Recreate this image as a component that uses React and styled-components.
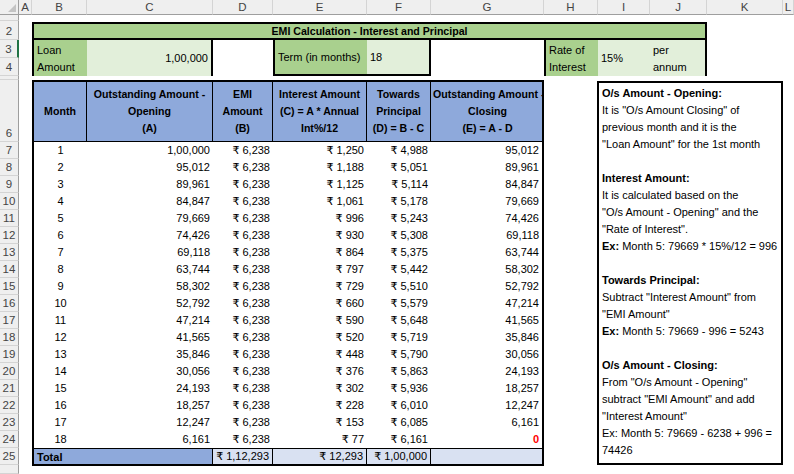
import React from 'react'
import styled, { createGlobalStyle } from 'styled-components'

const GlobalStyle = createGlobalStyle`
  html, body {
    margin: 0;
    padding: 0;
    background: #ffffff;
  }
  body {
    font-family: "Liberation Sans", "DejaVu Sans", "Noto Sans", sans-serif;
  }
`

const letters = ['A', 'B', 'C', 'D', 'E', 'F', 'G', 'H', 'I', 'J', 'K', 'L']
const rowNums = Array.from({ length: 26 }, (_, i) => i + 1)
// rows 1 and 5 are hidden (tiny), row 26 only peeks in at the bottom
const unlabelled = [1, 5, 26]

const schedule = [
  ['1', '1,00,000', '1,250', '4,988', '95,012'],
  ['2', '95,012', '1,188', '5,051', '89,961'],
  ['3', '89,961', '1,125', '5,114', '84,847'],
  ['4', '84,847', '1,061', '5,178', '79,669'],
  ['5', '79,669', '996', '5,243', '74,426'],
  ['6', '74,426', '930', '5,308', '69,118'],
  ['7', '69,118', '864', '5,375', '63,744'],
  ['8', '63,744', '797', '5,442', '58,302'],
  ['9', '58,302', '729', '5,510', '52,792'],
  ['10', '52,792', '660', '5,579', '47,214'],
  ['11', '47,214', '590', '5,648', '41,565'],
  ['12', '41,565', '520', '5,719', '35,846'],
  ['13', '35,846', '448', '5,790', '30,056'],
  ['14', '30,056', '376', '5,863', '24,193'],
  ['15', '24,193', '302', '5,936', '18,257'],
  ['16', '18,257', '228', '6,010', '12,247'],
  ['17', '12,247', '153', '6,085', '6,161'],
  ['18', '6,161', '77', '6,161', '0'],
]

const Sheet = styled.div`
  display: grid;
  grid-template-columns: 19px 13px 55px 126px 60px 94px 64px 113px 54px 52px 57px 76px 1fr;
  grid-template-rows: 15px 6px 19px 18px 18px 4px 62px repeat(19, 17px) 1fr;
  width: 794px;
  height: 474px;
  overflow: hidden;
  font-size: 11px;
  color: #000;
  background: #fff;
`

const Corner = styled.div`
  grid-column: 1;
  grid-row: 1;
  position: relative;
  background: #efefef;
  border-right: 1px solid #9e9e9e;
  border-bottom: 1px solid #9e9e9e;
  &::after {
    content: "";
    position: absolute;
    right: 2px;
    bottom: 2px;
    border-left: 8px solid transparent;
    border-bottom: 8px solid #c4c4c4;
  }
`

const ColHead = styled.div`
  grid-column: ${p => p.$col};
  grid-row: 1;
  display: flex;
  align-items: center;
  justify-content: center;
  background: #efefef;
  color: #444;
  font-size: 11.5px;
  border-right: 1px solid #d4d4d4;
  border-bottom: 1px solid #9e9e9e;
`

const RowHead = styled.div`
  grid-column: 1;
  grid-row: ${p => p.$row};
  display: flex;
  align-items: flex-end;
  justify-content: center;
  background: #efefef;
  color: #444;
  font-size: 11.5px;
  line-height: 16px;
  overflow: hidden;
  border-bottom: 1px solid #d4d4d4;
  border-right: ${p => (p.$active ? '2px solid #217346' : '1px solid #9e9e9e')};
`

const Title = styled.div`
  grid-column: 3 / 12;
  grid-row: 3;
  margin-top: 1px;
  border: 2px solid #000;
  background: #a9d08e;
  display: flex;
  align-items: center;
  justify-content: center;
  font-weight: bold;
  font-size: 10.6px;
`

const InputBox = styled.div`
  grid-column: ${p => p.$cols};
  grid-row: 4 / 6;
  display: grid;
  grid-template-columns: ${p => p.$tracks};
  border: 2px solid #000;
  border-top: none;
`

const Label = styled.div`
  background: #a9d08e;
  padding: ${p => (p.$stacked ? '2px 0 0 3px' : '0 0 0 3px')};
  line-height: 17px;
  display: flex;
  flex-direction: column;
  justify-content: ${p => (p.$stacked ? 'flex-start' : 'center')};
  white-space: nowrap;
`

const Value = styled.div`
  background: #e2efda;
  line-height: 17px;
  display: flex;
  flex-direction: column;
  justify-content: ${p => (p.$stacked ? 'flex-start' : 'center')};
  align-items: ${p => (p.$right ? 'flex-end' : 'flex-start')};
  padding: ${p => (p.$stacked ? '2px 3px 0 3px' : '0 3px')};
  white-space: nowrap;
`

const Table = styled.div`
  grid-column: 3 / 9;
  grid-row: 7 / 27;
  display: grid;
  grid-template-columns: 53px 126px 60px 94px 64px 1fr;
  grid-template-rows: 60px repeat(18, 17px) 1fr;
  border: 2px solid #000;
  margin-bottom: -1px;
`

const HeadCell = styled.div`
  background: #8ea9db;
  border-bottom: 1px solid #000;
  border-right: ${p => (p.$last ? 'none' : '1px solid #000')};
  display: flex;
  flex-direction: column;
  justify-content: center;
  align-items: ${p => (p.$clip ? 'flex-start' : 'center')};
  text-align: center;
  font-weight: bold;
  font-size: 10.6px;
  line-height: 17px;
  white-space: nowrap;
  overflow: hidden;
  padding-left: ${p => (p.$clip ? '2px' : '0')};
  span {
    align-self: center;
  }
`

const Cell = styled.div`
  line-height: 17px;
  text-align: ${p => p.$align || 'right'};
  padding: 0 3px;
  white-space: nowrap;
  color: ${p => (p.$alert ? '#ff0000' : '#000')};
  font-weight: ${p => (p.$alert ? 'bold' : 'normal')};
`

const TotalCell = styled.div`
  grid-column: ${p => p.$span || 'auto'};
  background: ${p => (p.$strong ? '#8ea9db' : '#d9e1f2')};
  border-top: 1px solid #000;
  border-right: ${p => (p.$last ? 'none' : '1px solid #000')};
  display: flex;
  align-items: center;
  justify-content: ${p => (p.$strong ? 'flex-start' : 'flex-end')};
  padding: 0 3px;
  font-weight: ${p => (p.$strong ? 'bold' : 'normal')};
  white-space: nowrap;
`

const Note = styled.div`
  grid-column: 10 / 13;
  grid-row: 7 / 27;
  margin-left: -1px;
  margin-top: 1px;
  border: 2px solid #000;
  background: #fff;
  padding: 2px 3px 0 3px;
  line-height: 17px;
  font-size: 11px;
  white-space: nowrap;
  overflow: hidden;
`

const NoteLine = styled.div`
  height: 17px;
  font-weight: ${p => (p.$heading ? 'bold' : 'normal')};
`

const rupee = v => `₹ ${v}`

const noteLines = [
  { text: 'O/s Amount - Opening:', heading: true },
  { text: 'It is "O/s Amount Closing" of' },
  { text: 'previous month and it is the' },
  { text: '"Loan Amount" for the 1st month' },
  { text: '' },
  { text: 'Interest Amount:', heading: true },
  { text: 'It is calculated based on the' },
  { text: '"O/s Amount - Opening" and the' },
  { text: '"Rate of Interest".' },
  { ex: 'Ex:', text: ' Month 5: 79669 * 15%/12 = 996' },
  { text: '' },
  { text: 'Towards Principal:', heading: true },
  { text: 'Subtract "Interest Amount" from' },
  { text: '"EMI Amount"' },
  { ex: 'Ex:', text: ' Month 5: 79669 - 996 = 5243' },
  { text: '' },
  { text: 'O/s Amount - Closing:', heading: true },
  { text: 'From "O/s Amount - Opening"' },
  { text: 'subtract "EMI Amount" and add' },
  { text: '"Interest Amount"' },
  { text: 'Ex: Month 5: 79669 - 6238 + 996 =' },
  { text: '74426' },
]

const App = () => {
  return (
    <>
      <GlobalStyle />
      <Sheet>
        <Corner />
        {letters.map((l, i) => (
          <ColHead key={l} $col={i + 2}>{l}</ColHead>
        ))}
        {rowNums.map(r => (
          <RowHead key={r} $row={r + 1} $active={r === 3}>
            {unlabelled.includes(r) ? '' : r}
          </RowHead>
        ))}

        <Title>EMI Calculation - Interest and Principal</Title>

        <InputBox $cols="3 / 5" $tracks="53px 1fr">
          <Label $stacked>
            <span>Loan</span>
            <span>Amount</span>
          </Label>
          <Value $right>1,00,000</Value>
        </InputBox>

        <InputBox $cols="6 / 8" $tracks="92px 1fr">
          <Label>Term (in months)</Label>
          <Value>18</Value>
        </InputBox>

        <InputBox $cols="9 / 12" $tracks="52px 52px 1fr">
          <Label $stacked>
            <span>Rate of</span>
            <span>Interest</span>
          </Label>
          <Value>15%</Value>
          <Value $stacked>
            <span>per</span>
            <span>annum</span>
          </Value>
        </InputBox>

        <Table>
          <HeadCell>Month</HeadCell>
          <HeadCell>
            <span>Outstanding Amount -</span>
            <span>Opening</span>
            <span>(A)</span>
          </HeadCell>
          <HeadCell>
            <span>EMI</span>
            <span>Amount</span>
            <span>(B)</span>
          </HeadCell>
          <HeadCell>
            <span>Interest Amount</span>
            <span>(C) = A * Annual</span>
            <span>Int%/12</span>
          </HeadCell>
          <HeadCell>
            <span>Towards</span>
            <span>Principal</span>
            <span>(D) = B - C</span>
          </HeadCell>
          <HeadCell $last $clip>
            <div>Outstanding Amount -</div>
            <span>Closing</span>
            <span>(E) = A - D</span>
          </HeadCell>

          {schedule.map(([m, open, interest, principal, close]) => (
            <React.Fragment key={m}>
              <Cell $align="center">{m}</Cell>
              <Cell>{open}</Cell>
              <Cell>{rupee('6,238')}</Cell>
              <Cell>{rupee(interest)}</Cell>
              <Cell>{rupee(principal)}</Cell>
              <Cell $alert={close === '0'}>{close}</Cell>
            </React.Fragment>
          ))}

          <TotalCell $span="1 / 3" $strong>Total</TotalCell>
          <TotalCell>{rupee('1,12,293')}</TotalCell>
          <TotalCell>{rupee('12,293')}</TotalCell>
          <TotalCell>{rupee('1,00,000')}</TotalCell>
          <TotalCell $last />
        </Table>

        <Note>
          {noteLines.map((line, i) => (
            <NoteLine key={i} $heading={line.heading}>
              {line.ex && <b>{line.ex}</b>}
              {line.text}
            </NoteLine>
          ))}
        </Note>
      </Sheet>
    </>
  )
}

export default App
